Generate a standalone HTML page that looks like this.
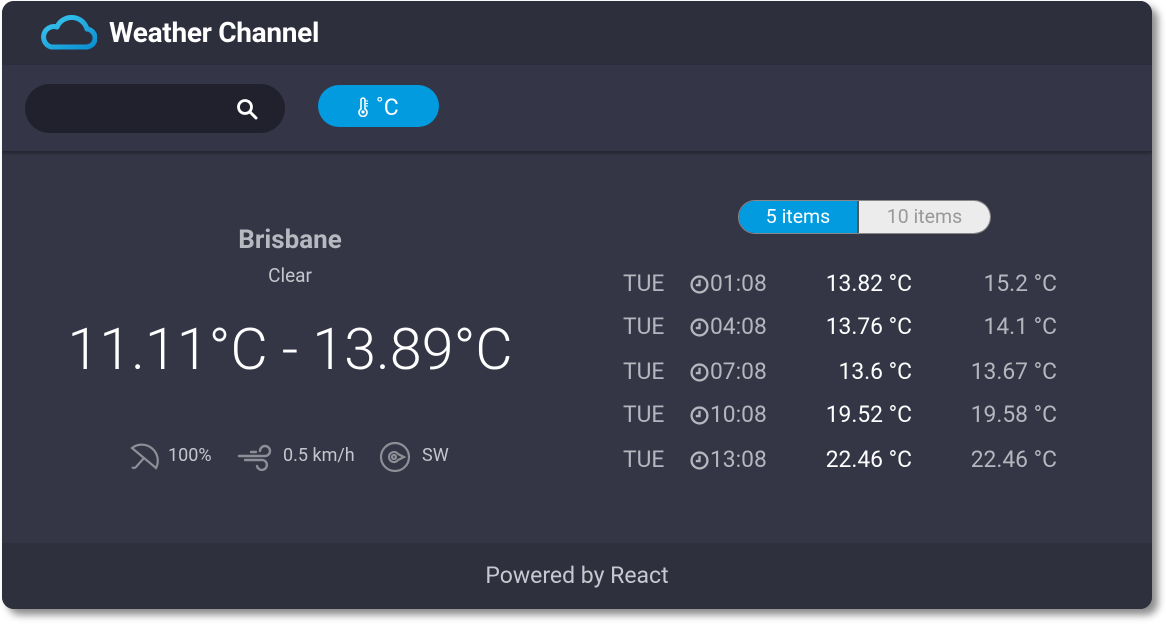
<!DOCTYPE html>
<html><head><meta charset="utf-8"><style>
*{box-sizing:border-box;margin:0;padding:0}
body{width:1166px;height:624px;background:#fff;font-family:Roboto,"Liberation Sans",sans-serif;position:relative;overflow:hidden}
.card{position:absolute;left:2px;top:1px;width:1150px;height:608px;border-radius:12px;overflow:hidden;background:#343646;box-shadow:6px 6px 8px rgba(0,0,0,.45)}
.hdr{height:64px;background:#2d2f3d;position:relative}
.hdr .t{position:absolute;left:107px;top:15px;color:#fff;font-size:28px;font-weight:bold;letter-spacing:-0.3px}
.bar{height:86px;background:#343647;position:relative;box-shadow:0 2px 3px rgba(0,0,0,.35)}
.search{position:absolute;left:23px;top:19px;width:260px;height:49px;border-radius:25px;background:#20212d}
.unit{position:absolute;left:316px;top:20px;width:121px;height:42px;border-radius:21px;background:#039be0;color:#fff;font-size:23px}
.main{position:absolute;top:152px;left:0;width:1150px;height:391px}
.foot{position:absolute;top:542px;left:0;width:1150px;height:66px;background:#2e303e;color:#c8c9d0;font-size:23px;text-align:center;line-height:66px}
.city{position:absolute;left:0;width:576px;text-align:center;top:72px;color:#b7b8c0;font-size:26px;font-weight:bold}
.cond{position:absolute;left:0;width:576px;text-align:center;top:111px;color:#c5c6cd;font-size:19px}
.temp{position:absolute;left:0;width:576px;text-align:center;top:164px;color:#fff;font-size:57.5px;font-weight:300}
.info{position:absolute;top:292px;color:#c5c6cd;font-size:18px}
.tog{position:absolute;left:736px;top:47px;width:253px;height:34px;border-radius:17px;overflow:hidden;border:1px solid #888;display:flex;font-size:19.5px}
.tog div{text-align:center;line-height:32px}
.row{position:absolute;left:0;width:1150px;height:30px;font-size:22.8px}
.row span{position:absolute;top:0}
.d{left:621px;color:#b5b6be}.h{left:708px;color:#b5b6be}.a{right:240px;color:#fff}.b{right:95px;color:#b5b6be}
.ck{position:absolute;left:688px;top:5px}
</style></head><body>
<div class="card">
<div class="hdr">
<svg style="position:absolute;left:35px;top:14px" width="60" height="36" viewBox="0 0 60 36"><defs><linearGradient id="g" x1="0" y1="0" x2="1" y2="1"><stop offset="0" stop-color="#3cc8f0"/><stop offset="1" stop-color="#0a8fd0"/></linearGradient></defs><path d="M14 32 H48 A9 9 0 0 0 50 14 A16 16 0 0 0 20 12 A10 10 0 0 0 14 32 Z" fill="none" stroke="url(#g)" stroke-width="5" stroke-linejoin="round"/></svg>
<div class="t">Weather Channel</div></div>
<div class="bar">
<div class="search"><svg style="position:absolute;left:211px;top:14px" width="22" height="22" viewBox="0 0 22 22"><circle cx="9" cy="9" r="6.5" fill="none" stroke="#fff" stroke-width="2.8"/><path d="M14 14 L20 20" stroke="#fff" stroke-width="3" stroke-linecap="round"/></svg></div>
<div class="unit"><svg style="position:absolute;left:40px;top:12px" width="12" height="20" viewBox="0 0 12 20"><path d="M3 3 a2 2 0 0 1 4 0 V12 a4 4 0 1 1 -4 0 Z" fill="none" stroke="#fff" stroke-width="1.6"/><circle cx="5" cy="15" r="1.6" fill="#fff"/><path d="M8 4h2M8 6.5h2M8 9h2" stroke="#fff" stroke-width="1"/></svg><span style="position:absolute;left:58px;top:9px">˚C</span></div>
</div>
<div class="main">
<div class="city">Brisbane</div>
<div class="cond">Clear</div>
<div class="temp">11.11°C - 13.89°C</div>
<svg style="position:absolute;left:127px;top:289px" width="34" height="30" viewBox="0 0 34 30" fill="none" stroke="#8d8e96" stroke-width="2.2"><path d="M3 6 A16 16 0 0 1 27 26 Z"/><path d="M15 16 L7 25 Q5 27 3 25"/></svg>
<div class="info" style="left:166px">100%</div>
<svg style="position:absolute;left:235px;top:290px" width="36" height="28" viewBox="0 0 36 28" fill="none" stroke="#8d8e96" stroke-width="2.4" stroke-linecap="round"><path d="M2 13 H28 A5 5 0 1 0 23 8"/><path d="M8 17 H24 A5 5 0 1 1 20 23"/><path d="M14 9 H19"/></svg>
<div class="info" style="left:281px">0.5 km/h</div>
<svg style="position:absolute;left:377px;top:288px" width="34" height="32" viewBox="0 0 34 32" fill="none" stroke="#8d8e96" stroke-width="2.2"><circle cx="16" cy="16" r="14"/><path d="M10 16 a5 5 0 0 1 9 -3 L25 16 L19 19 a5 5 0 0 1 -9 -3"/><circle cx="15" cy="16" r="2"/></svg>
<div class="info" style="left:420px">SW</div>
<div class="tog"><div style="width:120px;background:#039be0;color:#fff;border-right:2px solid #555">5 items</div><div style="flex:1;background:#ececec;color:#999">10 items</div></div>
<div class="row" style="top:117px"><svg class="ck" width="19" height="19" viewBox="0 0 18 18" fill="none" stroke="#b5b6be" stroke-width="2.2"><circle cx="9" cy="9" r="7.5"/><path d="M9 4.5V9.5H5.5"/></svg><span class="d">TUE</span><span class="h">01:08</span><span class="a">13.82 °C</span><span class="b">15.2 °C</span></div>
<div class="row" style="top:160px"><svg class="ck" width="19" height="19" viewBox="0 0 18 18" fill="none" stroke="#b5b6be" stroke-width="2.2"><circle cx="9" cy="9" r="7.5"/><path d="M9 4.5V9.5H5.5"/></svg><span class="d">TUE</span><span class="h">04:08</span><span class="a">13.76 °C</span><span class="b">14.1 °C</span></div>
<div class="row" style="top:205px"><svg class="ck" width="19" height="19" viewBox="0 0 18 18" fill="none" stroke="#b5b6be" stroke-width="2.2"><circle cx="9" cy="9" r="7.5"/><path d="M9 4.5V9.5H5.5"/></svg><span class="d">TUE</span><span class="h">07:08</span><span class="a">13.6 °C</span><span class="b">13.67 °C</span></div>
<div class="row" style="top:248px"><svg class="ck" width="19" height="19" viewBox="0 0 18 18" fill="none" stroke="#b5b6be" stroke-width="2.2"><circle cx="9" cy="9" r="7.5"/><path d="M9 4.5V9.5H5.5"/></svg><span class="d">TUE</span><span class="h">10:08</span><span class="a">19.52 °C</span><span class="b">19.58 °C</span></div>
<div class="row" style="top:293px"><svg class="ck" width="19" height="19" viewBox="0 0 18 18" fill="none" stroke="#b5b6be" stroke-width="2.2"><circle cx="9" cy="9" r="7.5"/><path d="M9 4.5V9.5H5.5"/></svg><span class="d">TUE</span><span class="h">13:08</span><span class="a">22.46 °C</span><span class="b">22.46 °C</span></div>
</div>
<div class="foot">Powered by React</div>
</div>
</body></html>
